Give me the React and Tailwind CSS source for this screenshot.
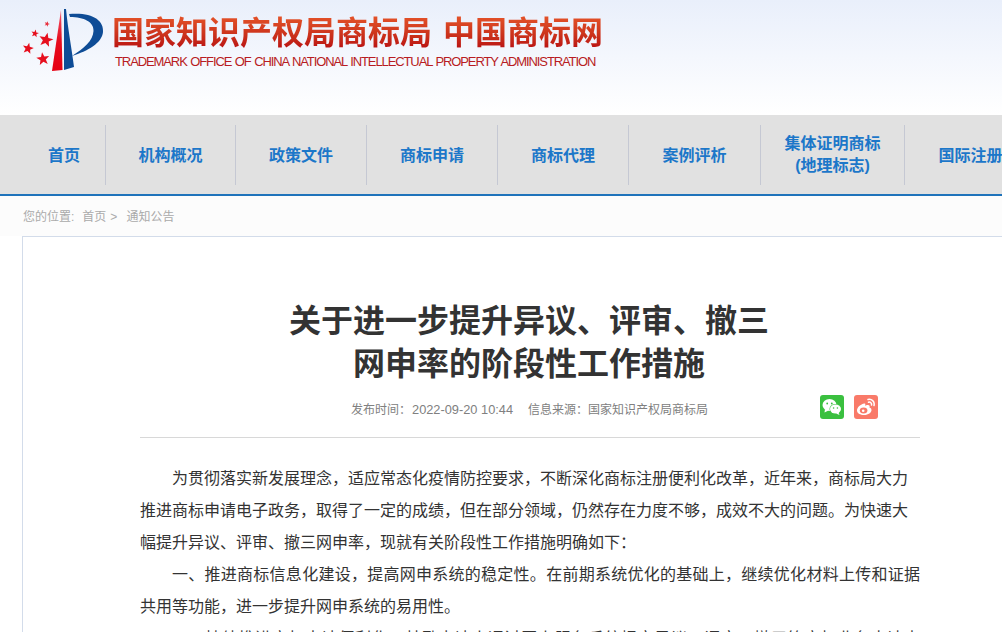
const cjk = "font-['Liberation_Sans','Noto_Sans_CJK_SC',sans-serif]";

function starPoints(cx, cy, r, rot) {
  const pts = [];
  for (let i = 0; i < 10; i++) {
    const rad = i % 2 === 0 ? r : r * 0.42;
    const a = ((rot - 90 + i * 36) * Math.PI) / 180;
    pts.push(`${(cx + rad * Math.cos(a)).toFixed(2)},${(cy + rad * Math.sin(a)).toFixed(2)}`);
  }
  return pts.join(" ");
}

function Logo() {
  return (
    <svg width="84" height="64" viewBox="22 8 84 64" className="shrink-0">
      <defs>
        <linearGradient id="rd" x1="0" y1="0" x2="0" y2="1">
          <stop offset="0" stopColor="#f4566a" />
          <stop offset="0.5" stopColor="#e60d1f" />
          <stop offset="1" stopColor="#e60012" />
        </linearGradient>
      </defs>
      <path d="M61 10 L62.5 70 L52 71 Z" fill="url(#rd)" />
      <path d="M64 9 L66 9 C68 30 72 50 74 67 L64 70 Z" fill="#0e4c96" />
      <path d="M69 14 C92 12 104 20 103 32 C102 43 88 51 72 56 C84 48 93 41 93.500 31 C94 22 84 17 70 17 Z" fill="#0e4c96" />
      <polygon points={starPoints(46, 40, 7.5, 12)} fill="#e60f1e" />
      <polygon points={starPoints(43, 59, 6.8, -8)} fill="#e60f1e" />
      <polygon points={starPoints(28, 48.500, 5.8, 12)} fill="#e60f1e" />
      <polygon points={starPoints(35, 33.500, 4, 12)} fill="#e60f1e" />
      <polygon points={starPoints(47, 24, 2.800, 20)} fill="#e8303e" />
    </svg>
  );
}

const nav = [
  { t: "首页", w: "w-[83px]" },
  { t: "机构概况", w: "w-[130px]" },
  { t: "政策文件", w: "w-[131px]" },
  { t: "商标申请", w: "w-[131px]" },
  { t: "商标代理", w: "w-[131px]" },
  { t: "案例评析", w: "w-[132px]" },
  { t: "集体证明商标", t2: "(地理标志)", w: "w-[144px]" },
  { t: "国际注册", w: "w-[131px]", last: true },
];

const intro =
  "为贯彻落实新发展理念，适应常态化疫情防控要求，不断深化商标注册便利化改革，近年来，商标局大力推进商标申请电子政务，取得了一定的成绩，但在部分领域，仍然存在力度不够，成效不大的问题。为快速大幅提升异议、评审、撤三网申率，现就有关阶段性工作措施明确如下：";
const paras = [
  "一、推进商标信息化建设，提高网申系统的稳定性。在前期系统优化的基础上，继续优化材料上传和证据共用等功能，进一步提升网申系统的易用性。",
  "二、持续推进商标申请便利化，鼓励申请人通过网上服务系统提交异议、评审、撤三等商标业务申请事项，进一步提高办理效率和服务水平。",
];

export default function App() {
  return (
    <div className={`w-[1002px] h-[632px] overflow-hidden bg-white ${cjk}`}>
      <header className="h-[115px] bg-gradient-to-b from-[#e9effb] to-[#ffffff] pl-[22px] pt-[8px] flex items-start">
        <Logo />
        <div className="ml-[6px] pt-[3px]">
          <div className="flex gap-[11px] text-[32px] leading-[38px] font-bold font-['Noto_Sans_CJK_SC',serif] whitespace-nowrap">
            <span className="bg-gradient-to-b from-[#ea5a2c] to-[#b90d12] bg-clip-text text-transparent">国家知识产权局商标局</span>
            <span className="bg-gradient-to-b from-[#ea5a2c] to-[#b90d12] bg-clip-text text-transparent">中国商标网</span>
          </div>
          <div className="pl-[3px] text-[13px] leading-[17px] mt-[4px] tracking-[-1.1px] [word-spacing:1px] text-[#b81c22] whitespace-nowrap">
            TRADEMARK OFFICE OF CHINA NATIONAL INTELLECTUAL PROPERTY ADMINISTRATION
          </div>
        </div>
      </header>

      <nav className="h-[81px] bg-[#e1e1e1] border-b-2 border-[#1f73bb] pt-[10px] pl-[23px] flex items-start overflow-hidden">
        {nav.map((n) => (
          <div
            key={n.t}
            className={`shrink-0 h-[60px] flex flex-col items-center justify-center text-[16px] leading-[22px] font-bold text-[#1c77c9] ${n.w} ${n.t2 ? "" : "pt-[1px]"} ${n.last ? "" : "border-r border-[#c5c8d3]"}`}
          >
            <span>{n.t}</span>
            {n.t2 && <span>{n.t2}</span>}
          </div>
        ))}
      </nav>

      <div className="bg-[#fcfcfc] h-[40px] pl-[23px] pt-[12px] text-[12px] leading-[18px] text-[#aaaaaa] flex">
        <span>您的位置:</span>
        <span className="ml-[8px]">首页</span>
        <span className="ml-[4px]">&gt;</span>
        <span className="ml-[9px]">通知公告</span>
      </div>

      <main className="ml-[22px] w-[1016px] border border-[#d3dcea] bg-white px-[117px] pt-[63px]">
        <h1 className="text-[32px] leading-[43px] font-bold text-[#333333] text-center w-[480px] ml-[149px]">
          关于进一步提升异议、评审、撤三网申率的阶段性工作措施
        </h1>
        <div className="flex items-center h-[28px] mt-[10px] pl-[211px] text-[12px] text-[#808080] whitespace-nowrap">
          <span>发布时间：<span className="ml-[1px] text-[12.8px]">2022-09-20 10:44</span></span>
          <span className="ml-[15px]">信息来源：国家知识产权局商标局</span>
          <span className="ml-[112px] mb-[6px] w-[24px] h-[24px] rounded-[3px] bg-[#3ac03f] flex items-center justify-center">
            <svg width="20" height="18" viewBox="0 0 20 18">
              <ellipse cx="7.5" cy="7" rx="7" ry="6" fill="#ffffff" />
              <path d="M3 11 L2.5 14.5 L6.5 12.5 Z" fill="#ffffff" />
              <ellipse cx="13.5" cy="11" rx="6" ry="5" fill="#3ac03f" />
              <ellipse cx="13.5" cy="11" rx="5.5" ry="4.6" fill="#ffffff" />
              <path d="M16.5 14.5 L17.5 17 L14 15.5 Z" fill="#ffffff" />
              <circle cx="5.2" cy="5.5" r="0.9" fill="#3ac03f" />
              <circle cx="9.8" cy="5.5" r="0.9" fill="#3ac03f" />
              <circle cx="11.6" cy="10" r="0.8" fill="#3ac03f" />
              <circle cx="15.4" cy="10" r="0.8" fill="#3ac03f" />
            </svg>
          </span>
          <span className="ml-[10px] mb-[6px] w-[24px] h-[24px] rounded-[3px] bg-[#f97a69] flex items-center justify-center">
            <svg width="20" height="18" viewBox="0 0 20 18">
              <path d="M8.5 5.5 C4.5 6 1 9.5 1 12.5 C1 15.5 4.5 17 8 17 C12.5 17 15.5 14.5 15.5 12 C15.5 10 13.5 9.8 13.5 9.5 C14 8 13.5 6.5 11 7 L9 7.7 C9.5 6.2 9.6 5.4 8.5 5.5 Z" fill="#ffffff" />
              <ellipse cx="7.6" cy="12.5" rx="3.8" ry="2.9" fill="#f97a69" />
              <circle cx="7.2" cy="12.7" r="1.3" fill="#ffffff" />
              <path d="M12 1.5 C15.5 0.5 19 3.5 18 7.5 M12.5 4.2 C14.3 3.6 16 5.2 15.5 7" fill="none" stroke="#ffffff" strokeWidth="1.5" strokeLinecap="round" />
            </svg>
          </span>
        </div>
        <div className="mt-[13px] border-t border-[#d8d8d8] pt-[25px]">
          <p className="text-[16px] leading-[32px] indent-[32px] text-[#333333]">{intro}</p>
          {paras.map((p) => (
            <p key={p} className="text-[16px] leading-[32px] indent-[32px] text-[#333333] text-justify">{p}</p>
          ))}
        </div>
      </main>
    </div>
  );
}
